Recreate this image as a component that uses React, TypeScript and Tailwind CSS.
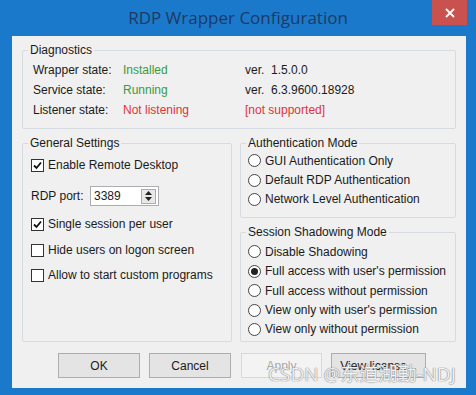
import React from 'react';

const font = { fontFamily: '"Liberation Sans", Arial, sans-serif' };

const Check = ({ checked }: { checked?: boolean }) => (
  <span className="w-[13px] h-[13px] border border-[#333333] bg-white flex items-center justify-center shrink-0">
    {checked && (
      <svg width="9" height="9" viewBox="0 0 9 9">
        <path d="M1 4.5 L3.5 7 L8 1.5" stroke="#111" strokeWidth="1.8" fill="none" />
      </svg>
    )}
  </span>
);

const Radio = ({ checked }: { checked?: boolean }) => (
  <span className="w-[13px] h-[13px] rounded-full border border-[#444444] bg-white flex items-center justify-center shrink-0">
    {checked && <span className="w-[7px] h-[7px] rounded-full bg-[#222222]" />}
  </span>
);

const Group = ({ title, className, children }: { title: string; className?: string; children: React.ReactNode }) => (
  <fieldset className="border border-[#d5dbe0] rounded-[2px]">
    <legend className="ml-[5px] px-[2px] leading-4">{title}</legend>
    <div className={className}>{children}</div>
  </fieldset>
);

const RadioRow = ({ label, checked }: { label: string; checked?: boolean }) => (
  <div className="flex items-center gap-[4px] h-[19.4px] whitespace-nowrap">
    <Radio checked={checked} />
    <span>{label}</span>
  </div>
);

const CheckRow = ({ label, checked, className }: { label: string; checked?: boolean; className?: string }) => (
  <div className={`flex items-center gap-[4px] h-5 whitespace-nowrap ${className ?? ''}`}>
    <Check checked={checked} />
    <span>{label}</span>
  </div>
);

const Button = ({ label, w, disabled }: { label: string; w: string; disabled?: boolean }) => (
  <div
    className={`${w} h-[25px] flex items-center justify-center border ${
      disabled ? 'border-[#d8d8d8] bg-[#f3f3f3] text-[#a8a8a8]' : 'border-[#adadad] bg-[#e4e4e4]'
    }`}
  >
    {label}
  </div>
);

export default function App() {
  return (
    <div className="w-[476px] h-[395px] bg-[#1b79cc] relative text-[12px] text-[#1a1a1a]" style={font}>
      {/* title bar */}
      <div className="h-[36px] flex items-center justify-center relative">
        <span className="text-[17px] text-[#1d3a63]" style={{ fontFamily: '"Open Sans", sans-serif' }}>
          RDP Wrapper Configuration
        </span>
        <div className="absolute right-[9px] top-0 w-[35px] h-[25px] bg-[#c9514e] flex items-center justify-center">
          <svg width="10" height="10" viewBox="0 0 10 10">
            <path d="M1 1 L9 9 M9 1 L1 9" stroke="#fff" strokeWidth="1.8" />
          </svg>
        </div>
      </div>

      {/* client area */}
      <div className="ml-[12px] w-[454px] h-[352px] bg-[#f0f0f0] px-[10px] pt-[6px] flex flex-col">
        <Group title="Diagnostics" className="pt-[2px] pb-[8px] pl-[10px]">
          {[
            ['Wrapper state:', 'Installed', 'text-[#3b9b3b]', 'ver.  1.5.0.0', ''],
            ['Service state:', 'Running', 'text-[#3b9b3b]', 'ver.  6.3.9600.18928', ''],
            ['Listener state:', 'Not listening', 'text-[#e0333a]', '[not supported]', 'text-[#e0333a]'],
          ].map(([a, b, bc, c, cc]) => (
            <div key={a} className="flex items-center h-5">
              <span className="w-[90px]">{a}</span>
              <span className={`w-[122px] ${bc}`}>{b}</span>
              <span className={`whitespace-pre ${cc}`}>{c}</span>
            </div>
          ))}
        </Group>

        <div className="flex gap-[8px] mt-[6px]">
          <fieldset className="w-[210px] h-[207px] border border-[#d5dbe0] rounded-[2px]">
            <legend className="ml-[5px] px-[2px] leading-4">General Settings</legend>
            <div className="pl-[8px] pt-[4px]">
              <CheckRow label="Enable Remote Desktop" checked />
              <div className="flex items-center mt-[11px] h-5">
                <span className="w-[59px]">RDP port:</span>
                <div className="w-[69px] h-[20px] border border-[#abadb3] bg-white flex items-center justify-between pl-[3px] pr-[2px]">
                  <span>3389</span>
                  <div className="w-[15px] h-[15px] border border-[#acacac] bg-[#e8e8e8] flex flex-col items-center justify-center gap-[2px]">
                    <svg width="7" height="4" viewBox="0 0 7 4"><path d="M0 4 L3.5 0 L7 4 Z" fill="#222" /></svg>
                    <svg width="7" height="4" viewBox="0 0 7 4"><path d="M0 0 L3.5 4 L7 0 Z" fill="#222" /></svg>
                  </div>
                </div>
              </div>
              <CheckRow label="Single session per user" checked className="mt-[8px]" />
              <CheckRow label="Hide users on logon screen" className="mt-[6px]" />
              <CheckRow label="Allow to start custom programs" className="mt-[5px]" />
            </div>
          </fieldset>

          <div className="w-[216px] flex flex-col gap-[6px]">
            <Group title="Authentication Mode" className="pl-[7px] pb-[8px]">
              <RadioRow label="GUI Authentication Only" />
              <RadioRow label="Default RDP Authentication" />
              <RadioRow label="Network Level Authentication" />
            </Group>
            <Group title="Session Shadowing Mode" className="pl-[7px] pt-[2px] pb-[2px]">
              <RadioRow label="Disable Shadowing" />
              <RadioRow label="Full access with user's permission" checked />
              <RadioRow label="Full access without permission" />
              <RadioRow label="View only with user's permission" />
              <RadioRow label="View only without permission" />
            </Group>
          </div>
        </div>

        <div className="flex mt-auto mb-[10px] pl-[36px]">
          <Button label="OK" w="w-[82px]" />
          <div className="w-[9px]" />
          <Button label="Cancel" w="w-[82px]" />
          <div className="w-[10px]" />
          <Button label="Apply" w="w-[81px]" disabled />
          <div className="w-[9px]" />
          <Button label="View license..." w="w-[95px]" />
        </div>
      </div>

      {/* CSDN watermark */}
      <div
        className="absolute left-[268px] top-[360px] text-[19px] text-white/90 whitespace-nowrap [text-shadow:0_0_1px_#777,0_0_1px_#777]"
        style={{ fontFamily: '"Open Sans", "Noto Sans CJK SC", sans-serif' }}
      >
        CSDN @东道湖勤-NDJ
      </div>
    </div>
  );
}
